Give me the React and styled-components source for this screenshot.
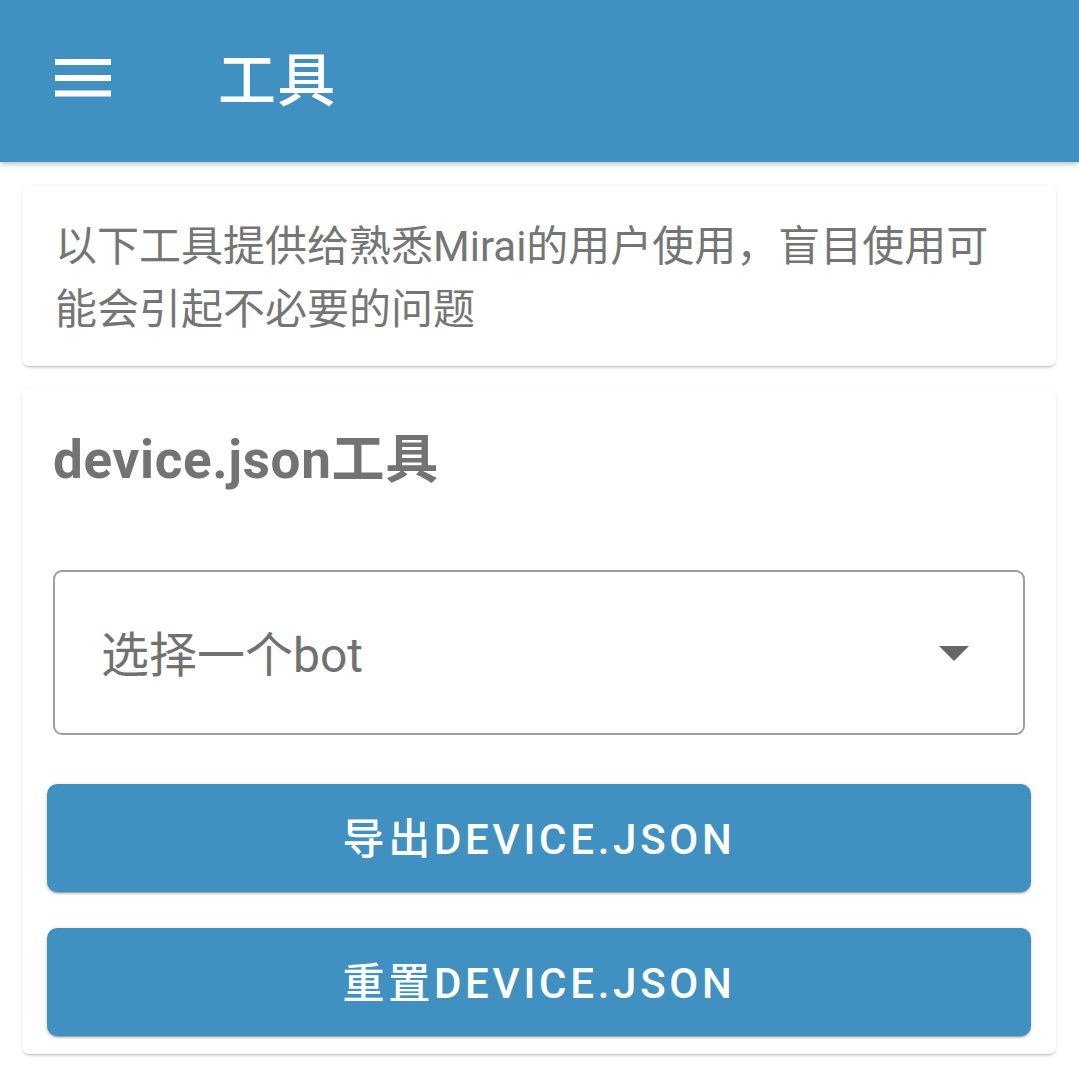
import React from "react";
import styled, { createGlobalStyle } from "styled-components";

const Global = createGlobalStyle`
  html, body { margin: 0; padding: 0; background: #ffffff; }
  body { font-family: Roboto, "Noto Sans CJK SC", sans-serif; }
  * { box-sizing: border-box; }
`;

const Page = styled.div`
  width: 1079px;
  min-height: 1073px;
  background: #ffffff;
`;

const AppBar = styled.header`
  height: 162px;
  background: #4190c2;
  display: flex;
  align-items: center;
  padding-left: 55px;
  gap: 107px;
  box-shadow: 0 2px 4px -1px rgba(0,0,0,0.14), 0 4px 5px 0 rgba(0,0,0,0.08), 0 1px 10px 0 rgba(0,0,0,0.08);
  position: relative;
  z-index: 1;
`;

const MenuIcon = styled.svg`
  width: 56px;
  height: 38px;
  margin-bottom: 6px;
  flex: none;
`;

const Title = styled.h1`
  margin: 0;
  color: #ffffff;
  font-size: 58px;
  font-weight: 500;
  line-height: 1;
  letter-spacing: 0.02em;
`;

const Content = styled.main`
  display: flex;
  flex-direction: column;
  gap: 23px;
  padding: 24px 23px 19px 22px;
`;

const Card = styled.section`
  background: #ffffff;
  border-radius: 7px;
  box-shadow: 0 3px 1px -2px rgba(0,0,0,0.12), 0 2px 2px 0 rgba(0,0,0,0.08), 0 1px 5px 0 rgba(0,0,0,0.08);
`;

const NoticeText = styled.p`
  margin: 0;
  padding: 29px 33px 25px 33px;
  color: #757575;
  font-size: 42px;
  line-height: 63px;
`;

const ToolCard = styled(Card)`
  padding: 29px 25px 18px 25px;
  display: flex;
  flex-direction: column;
`;

const CardTitle = styled.h2`
  margin: 0 0 68px 6px;
  color: #737373;
  font-size: 53px;
  font-weight: 700;
  line-height: 84px;
  letter-spacing: 0.0125em;
`;

const Select = styled.div`
  margin: 0 6px 49px 6px;
  height: 165px;
  border: 2px solid #9e9e9e;
  border-radius: 9px;
  display: flex;
  align-items: center;
  justify-content: space-between;
  padding: 0 54px 0 46px;
  color: #717171;
  font-size: 48px;
`;

const SelectLabel = styled.span`
  margin-bottom: 4px;
`;

const Caret = styled.svg`
  width: 30px;
  height: 15px;
  flex: none;
  margin-top: 2px;
`;

const Buttons = styled.div`
  display: flex;
  flex-direction: column;
  gap: 36px;
`;

const Button = styled.button`
  height: 108px;
  width: 100%;
  border: none;
  border-radius: 10px;
  background: #4190c2;
  color: #ffffff;
  font-family: Roboto, "Noto Sans CJK SC", sans-serif;
  font-size: 42px;
  font-weight: 500;
  letter-spacing: 0.0892857em;
  text-transform: uppercase;
  padding: 0 0 6px 0;
  box-shadow: 0 3px 1px -2px rgba(0,0,0,0.2), 0 2px 2px 0 rgba(0,0,0,0.14), 0 1px 5px 0 rgba(0,0,0,0.12);
  cursor: pointer;
`;

export default function App() {
  return (
    <Page>
      <Global />
      <AppBar>
        <MenuIcon viewBox="0 0 56 38">
          <rect x="0" y="0" width="56" height="6" fill="#fff" />
          <rect x="0" y="16" width="56" height="6" fill="#fff" />
          <rect x="0" y="31.5" width="56" height="6" fill="#fff" />
        </MenuIcon>
        <Title>工具</Title>
      </AppBar>
      <Content>
        <Card>
          <NoticeText>以下工具提供给熟悉Mirai的用户使用，盲目使用可能会引起不必要的问题</NoticeText>
        </Card>
        <ToolCard>
          <CardTitle>device.json工具</CardTitle>
          <Select>
            <SelectLabel>选择一个bot</SelectLabel>
            <Caret viewBox="0 0 30 15">
              <polygon points="0,0 30,0 15,15" fill="#666" />
            </Caret>
          </Select>
          <Buttons>
            <Button>导出device.json</Button>
            <Button>重置device.json</Button>
          </Buttons>
        </ToolCard>
      </Content>
    </Page>
  );
}
